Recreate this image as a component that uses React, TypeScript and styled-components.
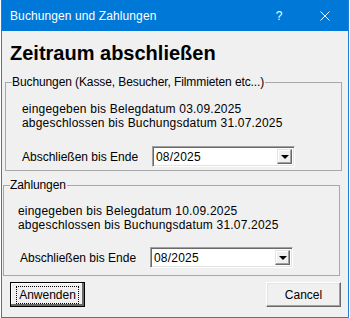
import styled, { createGlobalStyle } from 'styled-components';

const GlobalStyle = createGlobalStyle`
  html, body {
    margin: 0;
    background: #ffffff;
  }
  body {
    font-family: "Liberation Sans", Arial, sans-serif;
    font-size: 12px;
    color: #000000;
  }
`;

const Window = styled.div`
  background: #f0f0f0;
  border: 1px solid #1883d7;
  border-top: none;
  box-sizing: border-box;
  display: flex;
  flex-direction: column;
  height: 318px;
  margin-left: 1px;
  width: 348px;
`;

const TitleBar = styled.div`
  align-items: center;
  background: #0078d7;
  color: #ffffff;
  display: flex;
  flex-shrink: 0;
  height: 31px;
  padding-left: 8px;
`;

const TitleText = styled.span`
  flex: 1;
  font-size: 12px;
  letter-spacing: 0.1px;
`;

const TitleButton = styled.div`
  align-items: center;
  display: flex;
  height: 31px;
  justify-content: center;
  width: 46px;
`;

const Heading = styled.h1`
  font-size: 20px;
  font-weight: bold;
  line-height: 24px;
  margin: 10px 0 0 8px;
`;

const Group = styled.fieldset<{ $left: number; $top: number; $bottom: number }>`
  border: 1px solid #a8a8a8;
  box-sizing: border-box;
  margin: ${({ $top }) => $top}px 0 0 ${({ $left }) => $left}px;
  min-width: 0;
  padding: 0 0 ${({ $bottom }) => $bottom}px 0;
  width: 337px;
`;

const Legend = styled.legend`
  letter-spacing: -0.1px;
  line-height: 15px;
  margin-left: 6px;
  padding: 0 1px 0 0;
`;

const Info = styled.div<{ $indent: number; $top: number }>`
  letter-spacing: 0.2px;
  line-height: 14px;
  margin: ${({ $top }) => $top}px 0 0 ${({ $indent }) => $indent}px;
`;

const Row = styled.div<{ $indent: number; $top: number }>`
  align-items: center;
  display: grid;
  grid-template-columns: ${({ $indent }) => 146 - $indent}px 143px;
  margin: ${({ $top }) => $top}px 0 0 ${({ $indent }) => $indent}px;
`;

const Combo = styled.div`
  align-items: stretch;
  background: #ffffff;
  border-bottom: 1px solid #ffffff;
  border-left: 1px solid #a0a0a0;
  border-right: 1px solid #ffffff;
  border-top: 1px solid #a0a0a0;
  box-shadow: inset 1px 1px #696969, inset -1px -1px #e3e3e3;
  box-sizing: border-box;
  display: flex;
  height: 21px;
  padding: 2px;
`;

const ComboValue = styled.span`
  flex: 1;
  letter-spacing: 0.2px;
  line-height: 17px;
  padding-left: 1px;
`;

const DropButton = styled.div`
  align-items: center;
  background: #f0f0f0;
  border-bottom: 1px solid #696969;
  border-left: 1px solid #e3e3e3;
  border-right: 1px solid #696969;
  border-top: 1px solid #e3e3e3;
  box-shadow: inset -1px -1px #a0a0a0, inset 1px 1px #ffffff;
  box-sizing: border-box;
  display: flex;
  justify-content: center;
  width: 15px;
`;

const Arrow = styled.div`
  border-left: 4px solid transparent;
  border-right: 4px solid transparent;
  border-top: 4px solid #000000;
  height: 0;
  margin-top: 1px;
  width: 0;
`;

const ButtonBar = styled.div`
  display: flex;
  justify-content: space-between;
  margin: 6px 7px 0 8px;
`;

const Button = styled.div<{ $default?: boolean }>`
  align-items: center;
  background: #f0f0f0;
  border-bottom: 1px solid #696969;
  border-left: 1px solid #ffffff;
  border-right: 1px solid #696969;
  border-top: 1px solid #ffffff;
  box-shadow: inset -1px -1px #a0a0a0, inset 1px 1px #e3e3e3;
  box-sizing: border-box;
  display: flex;
  height: 25px;
  justify-content: center;
  width: 75px;
  ${({ $default }) =>
    $default &&
    `
    border: 1px solid #000000;
    box-shadow: inset -2px -2px #696969, inset 1px 1px #ffffff;
  `}
`;

const FocusLabel = styled.span`
  outline: 1px dotted #000000;
  outline-offset: 1px;
  padding: 0 1px;
`;

const Section = ({
  title,
  left,
  top,
  bottom,
  infoIndent,
  infoTop,
  rowIndent,
  rowTop,
  entered,
  closed,
}: {
  title: string;
  left: number;
  top: number;
  bottom: number;
  infoIndent: number;
  infoTop: number;
  rowIndent: number;
  rowTop: number;
  entered: string;
  closed: string;
}) => (
  <Group $left={left} $top={top} $bottom={bottom}>
    <Legend>{title}</Legend>
    <Info $indent={infoIndent} $top={infoTop}>
      eingegeben bis Belegdatum {entered}
      <br />
      abgeschlossen bis Buchungsdatum {closed}
    </Info>
    <Row $indent={rowIndent} $top={rowTop}>
      <span>Abschließen bis Ende</span>
      <Combo>
        <ComboValue>08/2025</ComboValue>
        <DropButton>
          <Arrow />
        </DropButton>
      </Combo>
    </Row>
  </Group>
);

export default function App() {
  return (
    <>
      <GlobalStyle />
      <Window>
        <TitleBar>
          <TitleText>Buchungen und Zahlungen</TitleText>
          <TitleButton>?</TitleButton>
          <TitleButton>
            <svg width="10" height="10" viewBox="0 0 10 10">
              <path d="M0.5 0.5 L9.5 9.5 M9.5 0.5 L0.5 9.5" stroke="#ffffff" strokeWidth="1" />
            </svg>
          </TitleButton>
        </TitleBar>
        <Heading>Zeitraum abschließen</Heading>
        <Section
          title="Buchungen (Kasse, Besucher, Filmmieten etc...)"
          left={3}
          top={10}
          bottom={3}
          infoIndent={16}
          infoTop={12}
          rowIndent={16}
          rowTop={16}
          entered="03.09.2025"
          closed="31.07.2025"
        />
        <Section
          title="Zahlungen"
          left={1}
          top={7}
          bottom={7}
          infoIndent={14}
          infoTop={11}
          rowIndent={16}
          rowTop={15}
          entered="10.09.2025"
          closed="31.07.2025"
        />
        <ButtonBar>
          <Button $default>
            <FocusLabel>Anwenden</FocusLabel>
          </Button>
          <Button>Cancel</Button>
        </ButtonBar>
      </Window>
    </>
  );
}
